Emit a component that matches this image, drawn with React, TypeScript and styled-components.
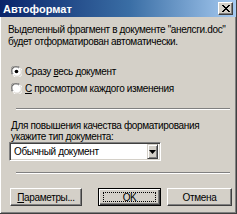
import React from 'react';
import styled, { createGlobalStyle } from 'styled-components';

const Global = createGlobalStyle`
  html, body { margin: 0; padding: 0; background: #d4d0c8; }
  * { box-sizing: border-box; }
`;

const Window = styled.div`
  width: 237px;
  height: 214px;
  display: flex;
  flex-direction: column;
  background: #d4d0c8;
  border-right: 1px solid #404040;
  border-bottom: 1px solid #404040;
  box-shadow: inset -1px -1px 0 #808080;
  font-family: 'Liberation Sans', Arial, sans-serif;
  font-size: 10px;
  letter-spacing: -0.35px;
  color: #000;
  overflow: hidden;
`;

const TitleBar = styled.div`
  height: 17px;
  flex: none;
  display: flex;
  align-items: center;
  justify-content: space-between;
  padding: 0 3px 0 3px;
  background: linear-gradient(to right, #0a246a 0%, #3a6ea5 55%, #a6caf0 100%);
`;

const Title = styled.span`
  color: #fff;
  font-weight: bold;
  font-size: 11px;
  letter-spacing: 0;
`;

const CloseBtn = styled.div`
  width: 15px;
  height: 13px;
  background: #d4d0c8;
  border: 1px solid;
  border-color: #fff #404040 #404040 #fff;
  box-shadow: inset -1px -1px 0 #808080;
  display: flex;
  align-items: center;
  justify-content: center;
`;

const Body = styled.div`
  flex: 1;
  display: flex;
  flex-direction: column;
  border-left: 1px solid #fff;
  padding: 7px 4px 0 7px;
`;

const Text = styled.div<{ $lh?: number }>`
  line-height: ${({ $lh }) => $lh ?? 12}px;
  white-space: nowrap;
`;

const RadioGroup = styled.div`
  display: flex;
  flex-direction: column;
  margin-top: 15px;
  padding-left: 3px;
`;

const RadioRow = styled.label`
  height: 17px;
  display: flex;
  align-items: center;
  gap: 3px;
  white-space: nowrap;
`;

const Sep = styled.div`
  height: 2px;
  border-top: 1px solid #808080;
  border-bottom: 1px solid #fff;
  margin: 11px 2px 0 8px;
`;

const Hint = styled.div`
  margin-top: 10px;
  padding-left: 3px;
`;

const Combo = styled.div`
  width: 152px;
  height: 19px;
  margin-left: 1px;
  display: flex;
  align-items: center;
  background: #fff;
  border: 1px solid;
  border-color: #808080 #fff #fff #808080;
  box-shadow: inset 1px 1px 0 #404040, inset -1px -1px 0 #d4d0c8;
  padding: 2px;
`;

const ComboText = styled.span`
  flex: 1;
  padding-left: 2px;
`;

const DropBtn = styled.div`
  width: 11px;
  height: 15px;
  background: #d4d0c8;
  border: 1px solid;
  border-color: #d4d0c8 #404040 #404040 #d4d0c8;
  box-shadow: inset 1px 1px 0 #fff, inset -1px -1px 0 #808080;
  display: flex;
  align-items: center;
  justify-content: center;
`;

const Buttons = styled.div`
  display: flex;
  align-items: center;
  margin-top: 14px;
  padding-left: 2px;
`;

const Button = styled.div<{ $w: number; $ml?: number; $def?: boolean }>`
  width: ${({ $w }) => $w}px;
  height: 18px;
  margin-left: ${({ $ml }) => $ml ?? 0}px;
  display: flex;
  align-items: center;
  justify-content: center;
  background: #d4d0c8;
  border: 1px solid;
  border-color: ${({ $def }) => ($def ? '#000' : '#fff #404040 #404040 #fff')};
  box-shadow: ${({ $def }) =>
    $def
      ? 'inset 1px 1px 0 #fff, inset -1px -1px 0 #404040, inset -2px -2px 0 #808080'
      : 'inset -1px -1px 0 #808080'};
  white-space: nowrap;
`;

const Focus = styled.span`
  display: flex;
  align-items: center;
  justify-content: center;
  width: calc(100% - 8px);
  height: 10px;
  border: 1px dotted #000;
`;

const Radio = ({ checked }: { checked?: boolean }) => (
  <svg width="11" height="11" viewBox="0 0 12 12">
    <circle cx="6" cy="6" r="5.5" fill="#fff" />
    <path d="M1.2 9.3 A5.5 5.5 0 0 1 9.3 1.2" stroke="#808080" strokeWidth="1" fill="none" />
    <path d="M2.2 8.6 A4.5 4.5 0 0 1 8.6 2.2" stroke="#404040" strokeWidth="1" fill="none" />
    <path d="M10.8 2.7 A5.5 5.5 0 0 1 2.7 10.8" stroke="#fff" strokeWidth="1" fill="none" />
    <path d="M9.8 3.4 A4.5 4.5 0 0 1 3.4 9.8" stroke="#d4d0c8" strokeWidth="1" fill="none" />
    {checked && <circle cx="6" cy="6" r="2" fill="#000" />}
  </svg>
);

export default function App() {
  return (
    <>
      <Global />
      <Window>
        <TitleBar>
          <Title>Автоформат</Title>
          <CloseBtn>
            <svg width="8" height="7" viewBox="0 0 8 7">
              <path d="M0 0 L7 7 M1 0 L8 7 M7 0 L0 7 M8 0 L1 7" stroke="#000" strokeWidth="1" />
            </svg>
          </CloseBtn>
        </TitleBar>
        <Body>
          <Text>Выделенный фрагмент в документе "анелсги.doc"</Text>
          <Text>будет отформатирован автоматически.</Text>
          <RadioGroup>
            <RadioRow>
              <Radio checked />
              <span>Сразу <u>в</u>есь документ</span>
            </RadioRow>
            <RadioRow>
              <Radio />
              <span><u>С</u> просмотром каждого изменения</span>
            </RadioRow>
          </RadioGroup>
          <Sep />
          <Hint>
            <Text $lh={11}><u>Д</u>ля повышения качества форматирования</Text>
            <Text $lh={11}>укажите тип документа:</Text>
          </Hint>
          <Combo>
            <ComboText>Обычный документ</ComboText>
            <DropBtn>
              <svg width="7" height="4" viewBox="0 0 7 4">
                <path d="M0 0 H7 L3.5 4 Z" fill="#000" />
              </svg>
            </DropBtn>
          </Combo>
          <Sep />
          <Buttons>
            <Button $w={72}><span><u>П</u>араметры...</span></Button>
            <Button $w={63} $ml={16} $def><Focus>OK</Focus></Button>
            <Button $w={65} $ml={6}>Отмена</Button>
          </Buttons>
        </Body>
      </Window>
    </>
  );
}
